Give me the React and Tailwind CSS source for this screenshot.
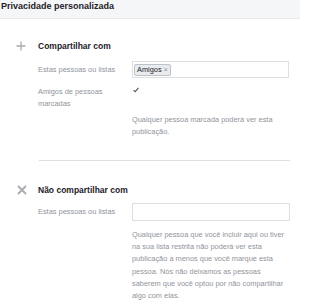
export default function App() {
  return (
    <div className="w-[300px] h-[300px] overflow-hidden bg-white font-['Liberation_Sans',Arial,sans-serif]">
      <div className="h-[19px] bg-[#f5f6f7] border-b border-[#e9eaed] pl-[1px] text-[9px] leading-[12px] font-bold text-[#1d2129]">
        Privacidade personalizada
      </div>

      {/* Section 1 */}
      <div className="mt-[21px] flex items-center h-[12px]">
        <div className="w-[38px] flex items-center">
          <svg className="ml-[16px]" width="10" height="10" viewBox="0 0 10 10">
            <path d="M5 0.5V9.5M0.5 5H9.5" stroke="#a7abb1" strokeWidth="1.3" />
          </svg>
        </div>
        <div className="text-[8.5px] font-bold leading-[12px] text-[#1d2129]">Compartilhar com</div>
      </div>

      <div className="pl-[38px]">
        <div className="mt-[9px] flex items-center">
          <div className="w-[94px] text-[7.4px] leading-[12px] text-[#90949c]">Estas pessoas ou listas</div>
          <div className="w-[157px] h-[17px] border border-[#dddfe2] flex items-center pl-[1px]">
            <div className="h-[12px] px-[2px] bg-[#e9ebee] border border-[#bec3c9] rounded-[2px] flex items-center gap-[2px] text-[7.4px] leading-[10px] text-[#1d2129]">
              <span>Amigos</span>
              <span className="text-[7px] text-[#90949c]">×</span>
            </div>
          </div>
        </div>

        <div className="mt-[8px] flex items-start">
          <div className="w-[94px] text-[7.4px] leading-[12px] text-[#90949c]">
            Amigos de pessoas
            <br />
            marcadas
          </div>
          <svg className="ml-[1px] mt-[1px]" width="6" height="6" viewBox="0 0 6 6">
            <path d="M0.6 3.2L2.2 4.8L5.4 0.9" fill="none" stroke="#4b4f56" strokeWidth="1.1" />
          </svg>
        </div>

        <div className="mt-[4px] pl-[94px] text-[7.4px] leading-[12px] text-[#90949c] whitespace-nowrap">
          Qualquer pessoa marcada poderá ver esta
          <br />
          publicação.
        </div>

        <div className="mt-[22px] ml-[1px] w-[251px] h-px bg-[#dddfe2]" />
      </div>

      {/* Section 2 */}
      <div className="mt-[23px] flex items-center h-[12px]">
        <div className="w-[38px] flex items-center">
          <svg className="ml-[17px]" width="10" height="10" viewBox="0 0 10 10">
            <path d="M1 1L9 9M9 1L1 9" stroke="#a7abb1" strokeWidth="1.8" />
          </svg>
        </div>
        <div className="text-[8.5px] font-bold leading-[12px] text-[#1d2129]">Não compartilhar com</div>
      </div>

      <div className="pl-[38px]">
        <div className="mt-[7px] flex items-center">
          <div className="w-[94px] text-[7.4px] leading-[12px] text-[#90949c]">Estas pessoas ou listas</div>
          <div className="w-[158px] h-[18px] border border-[#dddfe2]" />
        </div>

        <div className="mt-[8px] pl-[94px] text-[7.4px] leading-[12.2px] text-[#90949c] whitespace-nowrap">
          Qualquer pessoa que você incluir aqui ou tiver
          <br />
          na sua lista restrita não poderá ver esta
          <br />
          publicação a menos que você marque esta
          <br />
          pessoa. Nós não deixamos as pessoas
          <br />
          saberem que você optou por não compartilhar
          <br />
          algo com elas.
        </div>
      </div>
    </div>
  );
}
